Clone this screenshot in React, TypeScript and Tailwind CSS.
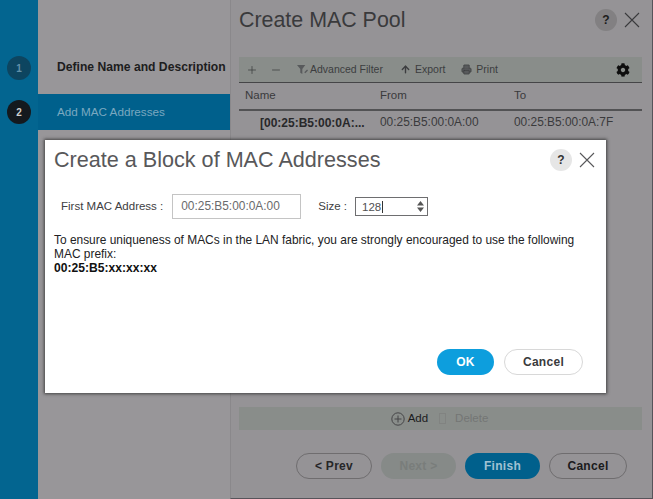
import { ArrowUp, Minus, Plus, Printer } from 'lucide-react'
import { FaCog } from 'react-icons/fa'

function WizardStep({ num, dark }: { num: string; dark?: boolean }) {
  return (
    <div
      className={`flex h-6 w-6 items-center justify-center rounded-full text-[10px] font-bold ${
        dark ? 'bg-[#14191e] text-[#d0d0d0]' : 'bg-[#0d4560] text-[#6391a9]'
      }`}
    >
      {num}
    </div>
  )
}

function PillButton({ label, className }: { label: string; className: string }) {
  return (
    <button className={`flex h-[26px] items-center justify-center rounded-full text-xs font-bold tracking-wide ${className}`}>
      {label}
    </button>
  )
}

function CloseIcon({ className }: { className: string }) {
  return (
    <svg className={`h-[16px] w-[16px] ${className}`} viewBox="0 0 16 16" fill="none" stroke="currentColor" strokeWidth="1.1">
      <path d="M1 1l14 14M15 1L1 15" />
    </svg>
  )
}

export default function App() {
  return (
    <div className='relative flex h-[499px] w-[653px] overflow-hidden bg-[#959396] font-["Liberation_Sans",Arial,sans-serif]'>
      {/* step rail */}
      <div className="flex w-[38px] shrink-0 flex-col items-center gap-[20px] bg-[#036590] pt-[56px]">
        <WizardStep num="1" />
        <WizardStep num="2" dark />
      </div>

      {/* step labels */}
      <div className="w-[192px] shrink-0 bg-[#989699] pt-[60px]">
        <div className="pl-[19px] text-[12.15px] font-bold leading-[15px] text-[#1d1d20]">Define Name and Description</div>
        <div className="mt-[19px] flex h-[36px] items-center bg-[#00608c] pb-[1px] pl-[19px] text-[11.7px] text-[#7aa8c0]">
          Add MAC Addresses
        </div>
      </div>

      {/* wizard content */}
      <div className="flex h-[499px] w-[423px] shrink-0 flex-col border-b border-r border-l border-b-[#56545a] border-r-[#56545a] border-l-[#8a888b] pl-[8px] pr-[10px] pt-[8px]">
        <div className="flex h-[24px] items-center justify-between">
          <h1 className="text-[21.4px] leading-[24px] text-[#3a3a3c]">Create MAC Pool</h1>
          <div className="flex items-center gap-[7px] pr-[2px]">
            <div className="flex h-[22px] w-[22px] items-center justify-center rounded-full bg-[#828082] text-xs font-bold text-[#1c1c1c]">?</div>
            <CloseIcon className="text-[#3a3a3d]" />
          </div>
        </div>

        <div className="mt-[25px] flex h-[26px] items-center border-b border-[#454547] bg-[#898d8a] pl-[7px] pr-[12px] text-[10.5px] text-[#3c3d3f]">
          <Plus className="h-[12px] w-[12px]" strokeWidth={1.5} />
          <Minus className="ml-[12px] h-[12px] w-[12px]" strokeWidth={1.5} />
          <svg className="ml-[15px] mr-[2px] h-[11px] w-[11px]" viewBox="0 0 12 12" fill="#585a5c">
            <path d="M0 1h9L5.8 5.5V11L3.6 9.5V5.5z" />
            <path d="M8 9l3-3 1 1-3 3z" />
          </svg>
          <span>Advanced Filter</span>
          <ArrowUp className="ml-[17px] mr-[4px] h-[11px] w-[11px]" strokeWidth={3} />
          <span>Export</span>
          <Printer className="ml-[16px] mr-[4px] h-[11px] w-[11px] fill-[#585a5c]" strokeWidth={1.5} />
          <span>Print</span>
          <FaCog className="ml-auto h-[14px] w-[14px] text-[#0e0e0e]" />
        </div>

        <div className="grid h-[28px] grid-cols-[135px_134px_1fr] items-center border-b-2 border-[#525254] pl-[6px] text-[11.5px] text-[#3a3a3c]">
          <span>Name</span>
          <span>From</span>
          <span>To</span>
        </div>
        <div className="grid h-[24px] grid-cols-[135px_134px_1fr] items-center pl-[6px] text-[11.9px] text-[#3a3a3c]">
          <span className="pl-[15px] text-[12px] font-bold text-[#28282a]">[00:25:B5:00:0A:...</span>
          <span>00:25:B5:00:0A:00</span>
          <span>00:25:B5:00:0A:7F</span>
        </div>

        {/* covered by the dialog */}
        <div className="h-[272px]" />

        <div className="flex h-[23px] items-center justify-center gap-[11px] bg-[#898d8a] pr-[2px] text-[11.5px]">
          <span className="flex items-center gap-[3px] text-[#1b1b1d]">
            <svg className="h-[14px] w-[14px]" viewBox="0 0 14 14" fill="none" stroke="#454547">
              <circle cx="7" cy="7" r="6.2" />
              <path d="M7 3.5v7M3.5 7h7" />
            </svg>
            Add
          </span>
          <span className="flex items-center gap-[9px] text-[#747675]">
            <span className="h-[11px] w-[7px] border border-[#818381]" />
            Delete
          </span>
        </div>

        <div className="mt-[23px] flex justify-end gap-[9px] pr-[15px]">
          <PillButton label="< Prev" className="w-[76px] border border-[#6f6d6f] text-[#262628]" />
          <PillButton label="Next >" className="w-[75px] bg-[#868a88] text-[#797d7b]" />
          <PillButton label="Finish" className="w-[75px] bg-[#00608c] text-[#a0c2d3]" />
          <PillButton label="Cancel" className="w-[78px] border border-[#6f6d6f] text-[#1b1b1d]" />
        </div>
      </div>

      {/* dialog */}
      <div className="absolute left-[45px] top-[140px] h-[253px] w-[561px] bg-white pl-[9px] pr-[11px] pt-[8px] shadow-[0_0_3px_1px_rgba(40,40,40,0.75)]">
        <div className="flex h-[24px] items-center justify-between">
          <h2 className="text-[21.6px] leading-[24px] text-[#58585a]">Create a Block of MAC Addresses</h2>
          <div className="flex items-center gap-[7px]">
            <div className="flex h-[22px] w-[22px] items-center justify-center rounded-full bg-[#e6e6e6] text-xs font-bold text-[#333]">?</div>
            <CloseIcon className="text-[#58585a]" />
          </div>
        </div>

        <div className="mt-[22px] flex items-center pl-[7px] text-[11.5px] text-[#404042]">
          <span>First MAC Address :</span>
          <div className="ml-[9px] flex h-[25px] w-[129px] items-center border border-[#c4c4c4] pl-[8px] text-[11.9px] text-[#6a6a6c]">00:25:B5:00:0A:00</div>
          <span className="ml-[17px]">Size :</span>
          <div className="ml-[8px] flex h-[19px] w-[73px] items-center justify-between border border-[#6e6e70] pl-[6px] pr-[3px] text-[#505052]">
            <span className="border-r border-[#333] pr-[1px] leading-[12px]">128</span>
            <svg className="h-[13px] w-[7px]" viewBox="0 0 7 13" fill="#555">
              <path d="M3.5 1L7 5.5H0zM3.5 12L0 7.5h7z" />
            </svg>
          </div>
        </div>

        <p className="mt-[14px] text-[11.93px] leading-[14px] text-[#222224]">
          To ensure uniqueness of MACs in the LAN fabric, you are strongly encouraged to use the following
          <br />
          MAC prefix:
          <br />
          <span className="text-[12.1px] font-bold text-[#111]">00:25:B5:xx:xx:xx</span>
        </p>

        <div className="absolute bottom-[18px] right-[23px] flex gap-[10px]">
          <PillButton label="OK" className="w-[57px] bg-[#0d9edd] text-white" />
          <PillButton label="Cancel" className="w-[79px] border border-[#d8d8d8] text-[#3a3a3c]" />
        </div>
      </div>
    </div>
  )
}
